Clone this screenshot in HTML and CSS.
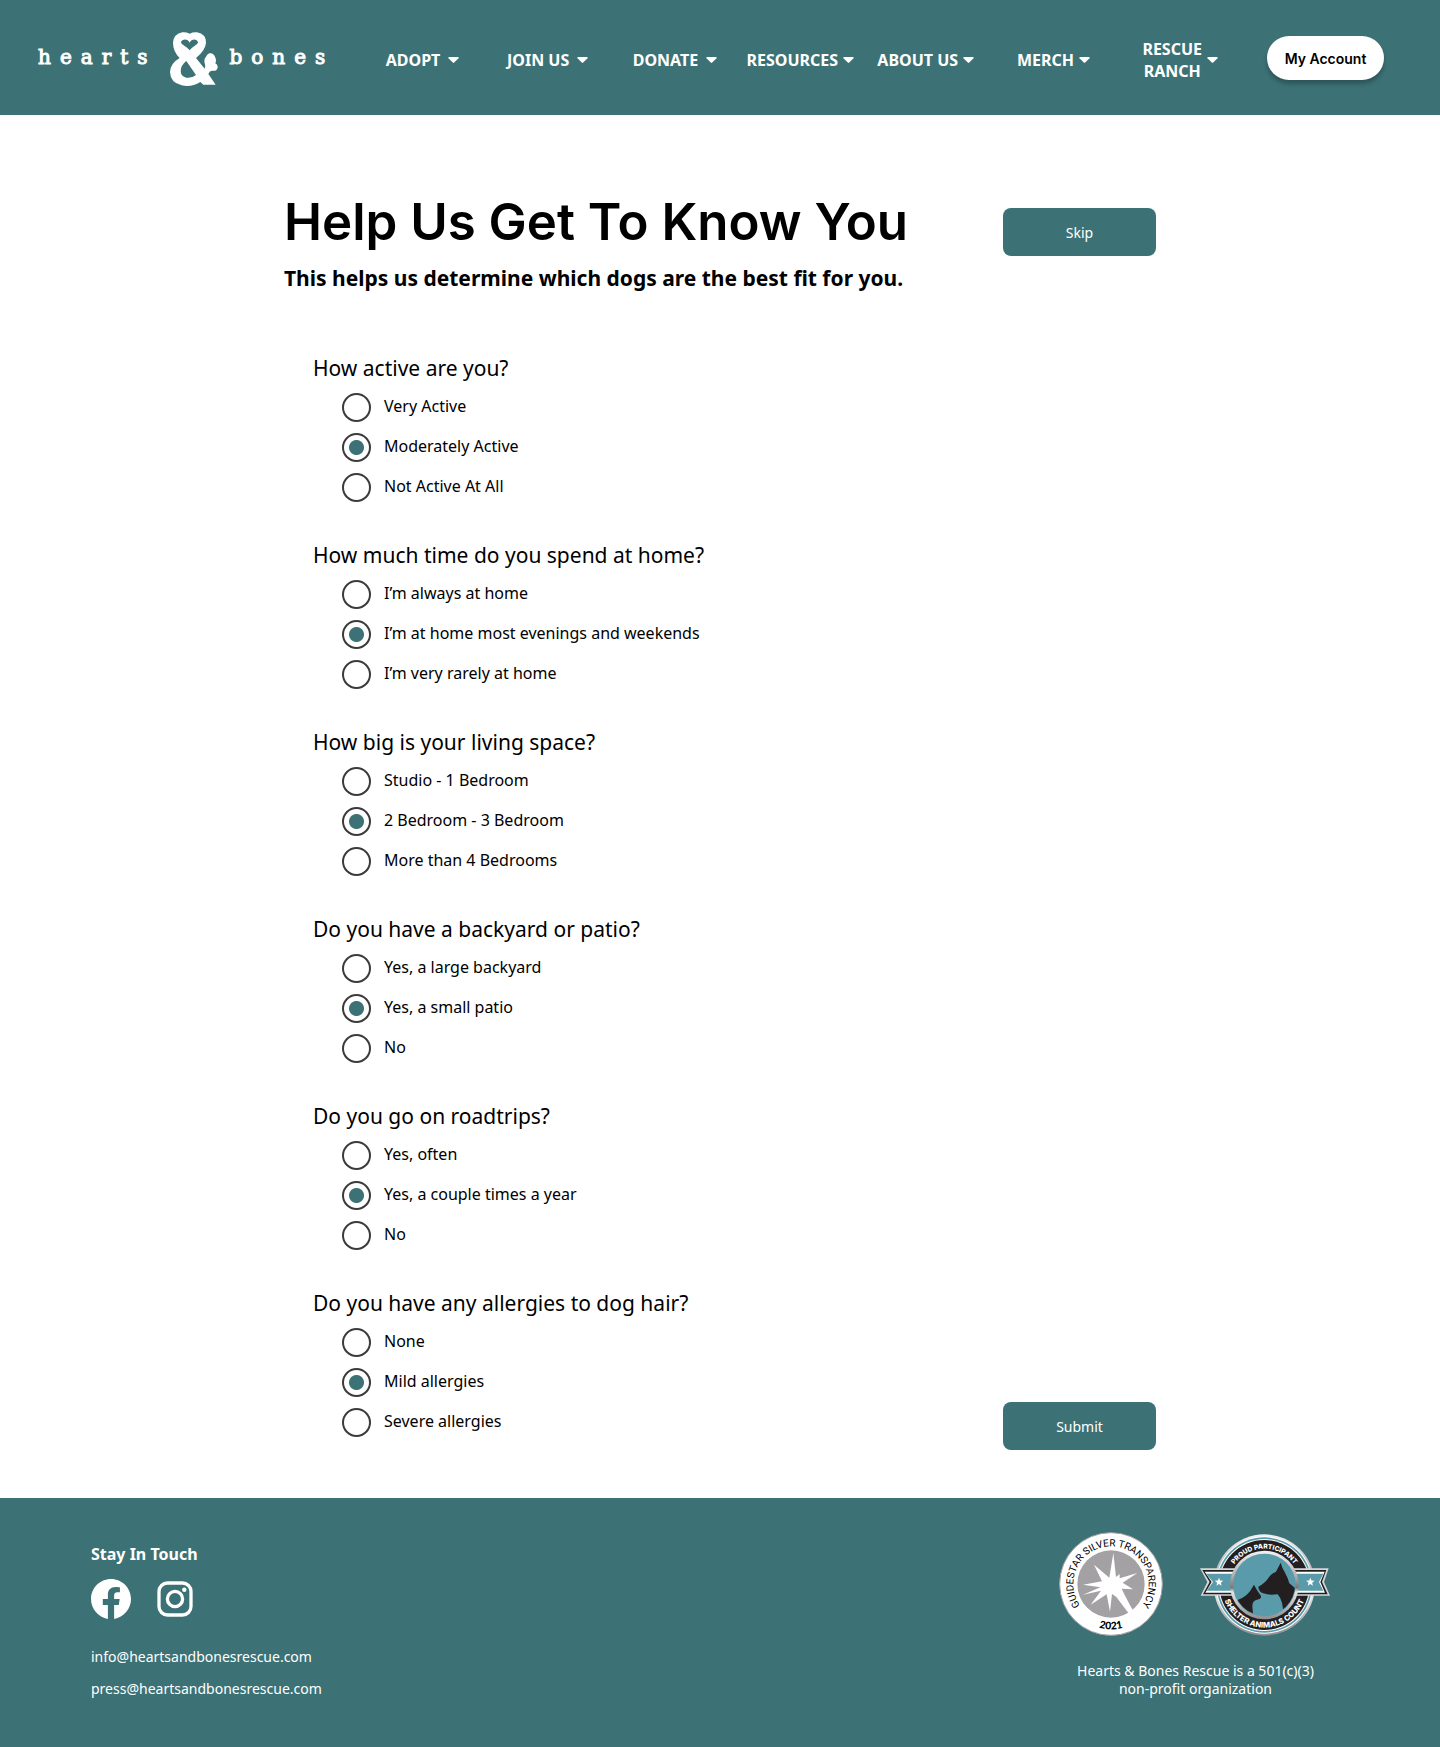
FILE: index.html
```html
<!DOCTYPE html>
<html lang="en">
<head>
  <meta charset="utf-8">
  <meta name="viewport" content="width=device-width, initial-scale=1">
  <title>Help Us Get To Know You - Hearts &amp; Bones</title>
  <link rel="stylesheet" href="styles.css">
</head>
<body>
  <header class="site-header">
    <a class="logo" href="#">
      <span>hearts</span>
      <svg class="logo-mark" viewBox="22 18 147 162" role="img" aria-label="&amp;">
        <path fill="#fff" fill-rule="evenodd" d="M84 23Q94 18 106 19Q133 24 133 50Q132 72 103 96L129 128Q132 119 129 112Q126 98 133 92Q139 79 148 82Q158 84 161 95Q165 102 161 112Q169 116 168 125Q164 137 152 134Q144 134 140 144L162 176H125L116 168Q90 184 60 178Q26 170 25 138Q26 112 54 96Q34 76 34 50Q36 24 62 19Q74 18 84 23ZM84 50C79 38 61 38 58 49C58 56 76 62 84 73C92 62 109 56 109 49C106 38 89 38 84 50ZM74 105Q57 118 57 136Q58 152 74 155Q91 157 103 147Z"/>
      </svg>
      <span>bones</span>
    </a>
    <nav class="main-nav" aria-label="Main">
      <button type="button" class="nav-item">ADOPT<svg class="caret" viewBox="0 0 11 6"><path d="M1 0h9q1 .5.5 1.200L6.200 5.600q-.7.600-1.400 0L.5 1.200Q0 .5 1 0z"/></svg></button>
      <button type="button" class="nav-item">JOIN US<svg class="caret" viewBox="0 0 11 6"><path d="M1 0h9q1 .5.5 1.200L6.200 5.600q-.7.600-1.400 0L.5 1.200Q0 .5 1 0z"/></svg></button>
      <button type="button" class="nav-item">DONATE<svg class="caret" viewBox="0 0 11 6"><path d="M1 0h9q1 .5.5 1.200L6.200 5.600q-.7.600-1.400 0L.5 1.200Q0 .5 1 0z"/></svg></button>
      <button type="button" class="nav-item tight">RESOURCES<svg class="caret" viewBox="0 0 11 6"><path d="M1 0h9q1 .5.5 1.200L6.200 5.600q-.7.600-1.400 0L.5 1.200Q0 .5 1 0z"/></svg></button>
      <button type="button" class="nav-item tight">ABOUT US<svg class="caret" viewBox="0 0 11 6"><path d="M1 0h9q1 .5.5 1.200L6.200 5.600q-.7.600-1.400 0L.5 1.200Q0 .5 1 0z"/></svg></button>
      <button type="button" class="nav-item tight">MERCH<svg class="caret" viewBox="0 0 11 6"><path d="M1 0h9q1 .5.5 1.200L6.200 5.600q-.7.600-1.400 0L.5 1.200Q0 .5 1 0z"/></svg></button>
      <button type="button" class="nav-item tight"><span>RESCUE<br>RANCH</span><svg class="caret" viewBox="0 0 11 6"><path d="M1 0h9q1 .5.5 1.200L6.200 5.600q-.7.600-1.400 0L.5 1.200Q0 .5 1 0z"/></svg></button>
    </nav>
    <button type="button" class="account">My Account</button>
  </header>

  <main class="page">
    <div class="intro">
      <div>
        <h1>Help Us Get To Know You</h1>
        <p class="subtitle">This helps us determine which dogs are the best fit for you.</p>
      </div>
      <button type="button" class="action">Skip</button>
    </div>

    <form class="quiz">
      <div class="questions">
        <fieldset>
          <legend>How active are you?</legend>
          <label><input type="radio" name="active">Very Active</label>
          <label><input type="radio" name="active" checked>Moderately Active</label>
          <label><input type="radio" name="active">Not Active At All</label>
        </fieldset>
        <fieldset>
          <legend>How much time do you spend at home?</legend>
          <label><input type="radio" name="home">I’m always at home</label>
          <label><input type="radio" name="home" checked>I’m at home most evenings and weekends</label>
          <label><input type="radio" name="home">I’m very rarely at home</label>
        </fieldset>
        <fieldset>
          <legend>How big is your living space?</legend>
          <label><input type="radio" name="space">Studio - 1 Bedroom</label>
          <label><input type="radio" name="space" checked>2 Bedroom - 3 Bedroom</label>
          <label><input type="radio" name="space">More than 4 Bedrooms</label>
        </fieldset>
        <fieldset>
          <legend>Do you have a backyard or patio?</legend>
          <label><input type="radio" name="yard">Yes, a large backyard</label>
          <label><input type="radio" name="yard" checked>Yes, a small patio</label>
          <label><input type="radio" name="yard">No</label>
        </fieldset>
        <fieldset>
          <legend>Do you go on roadtrips?</legend>
          <label><input type="radio" name="trips">Yes, often</label>
          <label><input type="radio" name="trips" checked>Yes, a couple times a year</label>
          <label><input type="radio" name="trips">No</label>
        </fieldset>
        <fieldset>
          <legend>Do you have any allergies to dog hair?</legend>
          <label><input type="radio" name="allergies">None</label>
          <label><input type="radio" name="allergies" checked>Mild allergies</label>
          <label><input type="radio" name="allergies">Severe allergies</label>
        </fieldset>
      </div>
      <button type="submit" class="action">Submit</button>
    </form>
  </main>

  <footer class="site-footer">
    <section class="contact">
      <h2>Stay In Touch</h2>
      <div class="social">
        <a href="#" aria-label="Facebook">
          <svg width="40" height="40" viewBox="0 0 24 24"><path fill="#fff" d="M24 12.073C24 5.446 18.627.073 12 .073S0 5.446 0 12.073c0 5.990 4.388 10.954 10.125 11.854v-8.385H7.078v-3.470h3.047V9.430c0-3.007 1.792-4.669 4.533-4.669 1.312 0 2.686.235 2.686.235v2.953H15.830c-1.491 0-1.956.925-1.956 1.874v2.250h3.328l-.532 3.470h-2.796v8.385C19.612 23.027 24 18.062 24 12.073z"/></svg>
        </a>
        <a href="#" aria-label="Instagram">
          <svg width="36" height="36" viewBox="0 0 36 36" fill="none" stroke="#fff"><rect x="2" y="2" width="32" height="32" rx="8.500" stroke-width="3.300"/><circle cx="18" cy="18" r="7.600" stroke-width="3.300"/><circle cx="27.300" cy="8.700" r="2.200" fill="#fff" stroke="none"/></svg>
        </a>
      </div>
      <a class="mail" href="mailto:info@heartsandbonesrescue.com">info@heartsandbonesrescue.com</a>
      <a class="mail" href="mailto:press@heartsandbonesrescue.com">press@heartsandbonesrescue.com</a>
    </section>

    <section class="credentials">
      <div class="badges">
        <svg width="104" height="104" viewBox="12 12 312 312" role="img" aria-label="GuideStar Silver Transparency 2021">
          <defs>
            <path id="gs-top" d="M168 281A113 113 0 0 1 168 55A113 113 0 0 1 168 281"/>
            <path id="gs-bottom" d="M32 168A136 136 0 0 0 304 168"/>
          </defs>
          <circle cx="168" cy="168" r="154" fill="#fff" stroke="#a3a1a4" stroke-width="3"/>
          <circle cx="168" cy="168" r="101" fill="#a3a1a4"/>
          <path fill="#fff" d="M175 75L183 147L194 138L194 151L247 135L203 164L234 184L200 182L209 201L234 248L222 257L184 207L171 198L165 251L155 199L107 230L138 188L84 200L136 178L84 170L141 160L117 110L163 149Z"/>
          <path stroke="#fff" stroke-width="13" d="M170 172L229 252"/>
          <text class="seal-text"><textPath href="#gs-top" startOffset="50%">GUIDESTAR SILVER TRANSPARENCY</textPath></text>
          <text class="seal-year"><textPath href="#gs-bottom" startOffset="50%">2021</textPath></text>
        </svg>
        <svg width="132" height="102" viewBox="12 18 396 306" role="img" aria-label="Proud Participant, Shelter Animals Count">
          <defs>
            <linearGradient id="silver" x1="0" y1="0" x2="0" y2="1">
              <stop offset="0" stop-color="#f2f2f2"/><stop offset=".35" stop-color="#b4b4b6"/><stop offset=".54" stop-color="#77777a"/><stop offset=".6" stop-color="#e4e4e4"/><stop offset="1" stop-color="#8d8d90"/>
            </linearGradient>
            <clipPath id="disc"><circle cx="205" cy="171" r="92"/></clipPath>
            <path id="sac-top" d="M96 171A109 109 0 0 1 314 171"/>
            <path id="sac-bottom" d="M77 171A128 128 0 0 0 333 171"/>
          </defs>
          <circle cx="205" cy="171" r="152" fill="url(#silver)"/>
          <circle cx="205" cy="171" r="146" fill="#fff"/>
          <circle cx="205" cy="171" r="143" fill="#5a9bab"/>
          <circle cx="205" cy="171" r="138" fill="#fff"/>
          <circle cx="205" cy="171" r="135" fill="#231f20"/>
          <path fill="#d5d7d8" d="M12 121H398L384 162L402 203H14L34 162Z"/>
          <path fill="#231f20" d="M19 126H391L378 162L395 199H21L41 162Z"/>
          <path fill="#fff" d="M26 131H386L373 162L387 194H28L47 162Z"/>
          <path fill="#5a9bab" d="M30 137H382L369 162L382 188H32L51 162Z"/>
          <path fill="#fff" d="M69 149l3.400 8.500 9.100.6-7 5.900 2.200 8.900-7.700-4.900-7.700 4.900 2.200-8.900-7-5.900 9.100-.6zM343 149l3.400 8.500 9.100.6-7 5.900 2.200 8.900-7.700-4.900-7.700 4.900 2.200-8.900-7-5.900 9.100-.6z"/>
          <circle cx="205" cy="171" r="103" fill="url(#silver)"/>
          <circle cx="205" cy="171" r="94" fill="#5a9bab"/>
          <g clip-path="url(#disc)" fill="#231f20">
            <path d="M254 104Q258 119 266 132Q276 150 280 166L302 184V240L262 262Q262 218 245 199Q218 203 202 196Q188 191 187 176Q206 166 215 153Q222 139 240 131Z"/>
            <path d="M174 170L184 188L195 204Q196 213 183 215Q169 218 169 234L172 268H105V220Q142 216 162 190Z"/>
          </g>
          <text class="ring-top"><textPath href="#sac-top" startOffset="50%">PROUD PARTICIPANT</textPath></text>
          <text class="ring-bottom"><textPath href="#sac-bottom" startOffset="50%">SHELTER ANIMALS COUNT</textPath></text>
        </svg>
      </div>
      <p>Hearts &amp; Bones Rescue is a 501(c)(3)<br>non-profit organization</p>
    </section>
  </footer>
</body>
</html>
```
FILE: styles.css
```css
:root {
  --teal: #3c7275;
}

* {
  box-sizing: border-box;
}

body {
  margin: 0;
  background: #fff;
  color: #000;
  font-family: "Noto Sans", "Open Sans", sans-serif;
  font-size: 16px;
}

button {
  border: 0;
  padding: 0;
  font: inherit;
  cursor: pointer;
}

.site-header {
  display: flex;
  align-items: center;
  min-height: 115px;
  padding: 3px 56px 0 38px;
  background: var(--teal);
}

.logo {
  display: flex;
  align-items: center;
  gap: 12px;
  color: #fff;
  font-family: "DejaVu Serif", serif;
  font-size: 20px;
  line-height: 24px;
  letter-spacing: 9px;
  text-decoration: none;
  -webkit-text-stroke: 1px #fff;
}

.logo span {
  padding-bottom: 4px;
}

.logo-mark {
  width: 49px;
  height: 54px;
}

.main-nav {
  display: grid;
  flex: 1;
  grid-template-columns: 85fr 129fr 129fr 137fr 120fr 116fr 128fr;
  align-items: center;
  margin: 0 49px 0 40px;
  padding-top: 2px;
}

.nav-item {
  display: flex;
  align-items: center;
  justify-content: flex-end;
  gap: 8px;
  background: none;
  color: #fff;
  font-weight: 700;
  line-height: 22px;
  white-space: nowrap;
}

.nav-item.tight {
  gap: 5px;
}

.caret {
  width: 11px;
  height: 6px;
  fill: #fff;
}

.account {
  width: 117px;
  height: 44px;
  margin-bottom: 2px;
  border-radius: 22px;
  background: #fff;
  box-shadow: 0 4px 4px rgba(0, 0, 0, 0.25);
  font-family: Inter, sans-serif;
  font-size: 14px;
  font-weight: 600;
}

.page {
  max-width: 872px;
  margin: 0 auto;
  padding: 77px 0 48px;
}

.intro {
  display: flex;
  align-items: flex-start;
  justify-content: space-between;
}

h1 {
  margin: 0;
  font-family: Inter, sans-serif;
  font-size: 51px;
  font-weight: 600;
  line-height: 60px;
}

.subtitle {
  margin: 12px 0 0;
  font-size: 21px;
  font-weight: 700;
  line-height: 28px;
}

.action {
  width: 153px;
  height: 48px;
  border-radius: 8px;
  background: var(--teal);
  color: #fff;
  font-size: 14px;
}

.intro .action {
  margin-top: 16px;
}

.quiz {
  display: flex;
  align-items: flex-end;
  justify-content: space-between;
  margin-top: 60px;
}

.questions {
  display: flex;
  flex-direction: column;
  gap: 37px;
  padding: 0 0 13px 29px;
}

fieldset {
  display: flex;
  flex-direction: column;
  gap: 11px;
  min-width: 0;
  margin: 0;
  border: 0;
  padding: 0 0 0 29px;
}

legend {
  margin: 0 0 9px -29px;
  padding: 0;
  font-size: 21px;
  line-height: 32px;
}

label {
  display: flex;
  align-items: flex-start;
  gap: 13px;
  height: 29px;
  line-height: 26px;
}

input[type="radio"] {
  appearance: none;
  width: 29px;
  height: 29px;
  margin: 0;
  border: 2px solid #3c3b3c;
  border-radius: 50%;
  background: #fff;
}

input[type="radio"]:checked {
  background: radial-gradient(circle, var(--teal) 7px, #fff 8px);
}

.site-footer {
  display: flex;
  justify-content: space-between;
  min-height: 249px;
  padding: 34px 108px 49px 91px;
  background: var(--teal);
  color: #fff;
  font-size: 14px;
}

.contact {
  display: flex;
  flex-direction: column;
  align-items: flex-start;
}

.contact h2 {
  margin: 10px 0 13px;
  font-size: 16px;
  font-weight: 700;
  line-height: 24px;
}

.social {
  display: flex;
  align-items: center;
  gap: 26px;
  margin-bottom: 28px;
}

.social a,
.social svg {
  display: block;
}

.mail {
  margin-bottom: 12px;
  color: #fff;
  line-height: 20px;
  text-decoration: none;
}

.credentials {
  text-align: center;
}

.badges {
  display: flex;
  align-items: flex-end;
  gap: 37px;
}

.credentials p {
  margin: 26px 0 0;
  line-height: 18px;
}

.seal-text {
  font: 400 30px Roboto, sans-serif;
  text-anchor: middle;
}

.seal-year {
  font: 900 31px Lato, sans-serif;
  text-anchor: middle;
}

.ring-top {
  fill: #fff;
  font: 800 20px Inter, sans-serif;
  text-anchor: middle;
}

.ring-bottom {
  fill: #fff;
  font: 800 23px Inter, sans-serif;
  text-anchor: middle;
}
```
